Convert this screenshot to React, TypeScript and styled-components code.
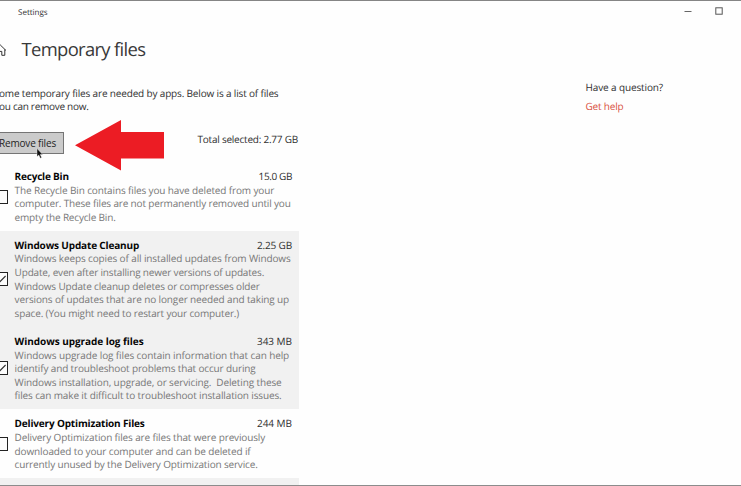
import React from "react";
import styled, { createGlobalStyle } from "styled-components";

const GlobalStyle = createGlobalStyle`
  * { box-sizing: border-box; }
  body { margin: 0; background: #fff; }
`;

const Window = styled.div`
  position: relative;
  display: flex;
  flex-direction: column;
  width: 741px;
  height: 486px;
  overflow: hidden;
  border-top: 1px solid #858585;
  border-bottom: 1px solid #8c8c8c;
  background: #fefefe;
  color: #303030;
  font: 400 10px/13.6px "Open Sans", "Noto Sans", sans-serif;
  font-kerning: normal;
  text-rendering: geometricPrecision;
`;

const TitleBar = styled.header`
  display: flex;
  flex: none;
  justify-content: space-between;
  height: 22px;
  padding: 5px 18px 0 18px;
  font-size: 8px;
`;

const Controls = styled.div`
  display: flex;
  gap: 23px;
  padding-top: 1px;
`;

const Columns = styled.div`
  display: flex;
  flex: 1;
  min-height: 0;
`;

const Main = styled.main`
  flex: none;
  width: 299px;
`;

const Aside = styled.aside`
  display: flex;
  flex-direction: column;
  gap: 6px;
  margin-left: 286.5px;
  padding-top: 57.5px;
`;

const Heading = styled.div`
  display: flex;
  align-items: center;
  gap: 14.5px;
  height: 54px;
  margin-left: -6px;
`;

const Title = styled.h1`
  margin: 0;
  color: #383838;
  font-size: 18.4px;
  font-weight: 400;
  line-height: 26px;
`;

const Intro = styled.p`
  display: flex;
  flex-direction: column;
  height: 55px;
  margin: 0 0 0 -1px;
  padding-top: 9.5px;
`;

const Line = styled.span<{ $track?: number }>`
  display: block;
  white-space: pre;
  letter-spacing: ${({ $track = 0 }) => $track}px;
`;

const Actions = styled.div`
  display: flex;
  justify-content: space-between;
  height: 30px;
  padding: 1px 1px 0 0;
`;

const RemoveButton = styled.button`
  width: 72px;
  height: 22px;
  margin: -1px 0 0 -8px;
  padding: 1.5px 0 0 6px;
  border: 1px solid #757575;
  background: #cbcbcb;
  color: #242424;
  font: inherit;
  text-align: left;
`;

const Row = styled.section<{ $shaded?: boolean }>`
  display: flex;
  align-items: center;
  gap: 6.6px;
  padding: 8px 7px 6.5px 0;
  background: ${({ $shaded }) => ($shaded ? "#f1f1f1" : "transparent")};
`;

const Check = styled.span`
  display: flex;
  flex: none;
  width: 14px;
  height: 14px;
  margin: -1px 0 0 -6px;
  border: 1px solid #222;
  background: #fcfcfc;
`;

const Details = styled.div`
  flex: 1;
  color: #777;
`;

const RowHead = styled.div`
  display: flex;
  justify-content: space-between;
  color: #303030;
`;

const Name = styled(Line)`
  color: #060606;
  font-weight: 700;
`;

const HelpLink = styled.a`
  color: #d9513f;
`;

const Overlay = styled.svg<{ $x: number; $y: number }>`
  position: absolute;
  left: ${({ $x }) => $x}px;
  top: ${({ $y }) => $y}px;
`;

type Text = [string, number];
interface Category {
  name: Text;
  size: Text;
  checked?: boolean;
  lines: Text[];
}

const categories: Category[] = [
  {
    name: ["Recycle Bin", -0.2],
    size: ["15.0 GB", -0.38],
    lines: [
      ["The Recycle Bin contains files you have deleted from your", -0.134],
      ["computer. These files are not permanently removed until you", -0.165],
      ["empty the Recycle Bin.", -0.179],
    ],
  },
  {
    name: ["Windows Update Cleanup", -0.154],
    size: ["2.25 GB", -0.158],
    checked: true,
    lines: [
      ["Windows keeps copies of all installed updates from Windows", -0.12],
      ["Update, even after installing newer versions of updates.", -0.174],
      ["Windows Update cleanup deletes or compresses older", -0.167],
      ["versions of updates that are no longer needed and taking up", -0.125],
      ["space. (You might need to restart your computer.)", -0.152],
    ],
  },
  {
    name: ["Windows upgrade log files", -0.05],
    size: ["343 MB", -0.034],
    checked: true,
    lines: [
      ["Windows upgrade log files contain information that can help", -0.105],
      ["identify and troubleshoot problems that occur during", -0.142],
      ["Windows installation, upgrade, or servicing.\u00a0 Deleting these", -0.122],
      ["files can make it difficult to troubleshoot installation issues.", -0.132],
    ],
  },
  {
    name: ["Delivery Optimization Files", -0.168],
    size: ["244 MB", -0.034],
    lines: [
      ["Delivery Optimization files are files that were previously", -0.139],
      ["downloaded to your computer and can be deleted if", -0.127],
      ["currently unused by the Delivery Optimization service.", -0.162],
    ],
  },
];

function CategoryRow({ name, size, checked, lines }: Category) {
  return (
    <Row $shaded={checked}>
      <Check>
        {checked && (
          <svg width="12" height="12" viewBox="0 0 12 12" fill="none" stroke="#303030" strokeWidth="1.1">
            <path d="M1.5 6 4.6 9 10.6 3" />
          </svg>
        )}
      </Check>
      <Details>
        <RowHead>
          <Name $track={name[1]}>{name[0]}</Name>
          <Line $track={size[1]}>{size[0]}</Line>
        </RowHead>
        {lines.map(([text, track]) => (
          <Line key={text} $track={track}>{text}</Line>
        ))}
      </Details>
    </Row>
  );
}

export default function App() {
  return (
    <Window>
      <GlobalStyle />
      <TitleBar>
        <Line>Settings</Line>
        <Controls>
          <svg width="8" height="8" viewBox="0 0 8 8" stroke="#666">
            <path d="M0.5 4.5H7.5" />
          </svg>
          <svg width="8" height="8" viewBox="0 0 8 8" fill="none" stroke="#555">
            <rect x="0.8" y="0.8" width="6.4" height="6.4" />
          </svg>
        </Controls>
      </TitleBar>
      <Columns>
        <Main>
          <Heading>
            <svg width="13" height="12" viewBox="0 0 13 12" fill="none" stroke="#333" strokeWidth="1">
              <path d="M0.7 6.5 6.3 1 12 6.5M2 5.4V11.3H4.9V7.4H7.8V11.3H10.8V5.4" />
            </svg>
            <Title><Line $track={-0.65}>Temporary files</Line></Title>
          </Heading>
          <Intro>
            <Line $track={-0.16}>ome temporary files are needed by apps. Below is a list of files</Line>
            <Line $track={-0.28}>ou can remove now.</Line>
          </Intro>
          <Actions>
            <RemoveButton><Line $track={-0.172}>Remove files</Line></RemoveButton>
            <Line $track={-0.226}>Total selected: 2.77 GB</Line>
          </Actions>
          {categories.map((category) => (
            <CategoryRow key={category.name[0]} {...category} />
          ))}
          <Row $shaded />
        </Main>
        <Aside>
          <Line $track={-0.12}>Have a question?</Line>
          <HelpLink><Line $track={-0.18}>Get help</Line></HelpLink>
        </Aside>
      </Columns>
      <Overlay $x={75} $y={118} width="90" height="52" viewBox="0 0 90 52">
        <path d="M0 26.3 46 1V13H89V39.5H46V51.5Z" fill="#ec1c24" />
      </Overlay>
      <Overlay $x={36} $y={147} width="8" height="11" viewBox="0 0 8 11">
        <path d="M1 0.5V8.6L2.8 7L4.3 10.2L5.6 9.6L4.2 6.5H6.6Z" fill="#111" stroke="#eee" strokeWidth="0.4" />
      </Overlay>
    </Window>
  );
}
